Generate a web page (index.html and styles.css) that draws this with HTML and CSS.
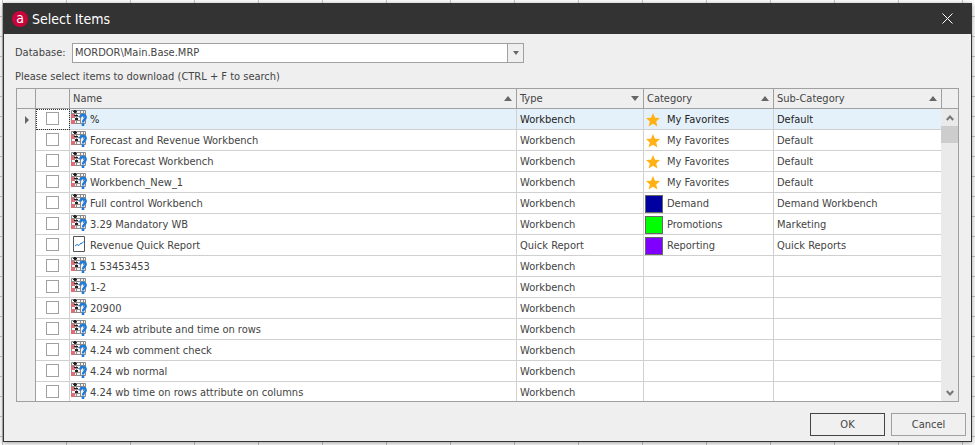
FILE: index.html
```html
<!DOCTYPE html>
<html lang="en">
<head>
<meta charset="utf-8">
<title>Select Items</title>
<link rel="stylesheet" href="styles.css">
</head>
<body>
<svg class="defs" aria-hidden="true">
  <symbol id="workbench" viewBox="0 0 16 16">
    <path fill="#f4f4f4" d="M0 0h14v14H0z"/>
    <path fill="none" stroke="#8a8a8a" d="M.5.5h14v13H.5zM5.500 0v14M9.500 0v14M12.500 0v8M0 3.500h14M0 6.500h9M0 10.500h10"/>
    <path fill="#dc6f76" d="M0 4h4v4H0zM0 10h4v4H0z"/>
    <path fill="#222" d="M2 1h4v1H2zM3 0h2v3H3zM3 5h4v1H3zM4 8h3v2H4z"/>
    <path fill="none" stroke="#1b7bdc" stroke-width="2.500" d="M9.300 7.500C9.500 4 14.700 4.200 14.700 7.200c0 2.300-2.700 2.300-2.700 5.300"/>
    <path fill="#1b7bdc" d="M10.700 13.500h2.600V16h-2.600z"/>
  </symbol>
  <symbol id="report" viewBox="0 0 16 16">
    <path fill="#fff" stroke="#555" d="M2.500.5h11v15h-11z"/>
    <path fill="none" stroke="#1b7bdc" d="m4 10 2-1.500 2 1 2-2.500 1 .5 1.500-2"/>
  </symbol>
  <symbol id="star" viewBox="0 0 14 14">
    <path fill="#ffb115" d="m7 0 2 4.700 5 .4-3.800 3.300 1.200 5L7 10.700l-4.400 2.700 1.200-5L0 5.100l5-.4z"/>
  </symbol>
</svg>
<main class="dialog">
  <header class="titlebar">
    <span class="logo">a</span>
    <h1>Select Items</h1>
    <button class="close" aria-label="Close"><svg viewBox="0 0 11 11"><path d="m.5.5 10 10m0-10-10 10"/></svg></button>
  </header>
  <div class="content">
    <div class="field">
      <label for="database">Database:</label>
      <div class="combo">
        <select id="database"><option>MORDOR\Main.Base.MRP</option></select>
        <span class="drop"><i class="down small"></i></span>
      </div>
    </div>
    <p class="hint">Please select items to download (CTRL + F to search)</p>
    <div class="frame">
      <table>
        <colgroup><col class="c-mark"><col class="c-check"><col><col class="c-type"><col class="c-cat"><col class="c-sub"></colgroup>
        <thead>
          <tr><th></th><th></th><th><span>Name<i class="up"></i></span></th><th><span>Type<i class="down"></i></span></th><th><span>Category<i class="up"></i></span></th><th><span>Sub-Category<i class="up"></i></span></th></tr>
        </thead>
        <tbody id="rows"></tbody>
      </table>
      <div class="scroll">
        <div class="corner"></div>
        <button aria-label="Scroll up"><svg viewBox="0 0 8 6"><path d="m.8 5 3.200-3.500L7.200 5"/></svg></button>
        <div class="thumb"></div>
        <button class="last" aria-label="Scroll down"><svg viewBox="0 0 8 6"><path d="m.8 1 3.200 3.500L7.200 1"/></svg></button>
      </div>
    </div>
  </div>
  <footer class="actions"><button class="primary">OK</button><button>Cancel</button></footer>
</main>
<script src="items.js"></script>
</body>
</html>
```
FILE: items.js
```js
const items = [
  ["%", "Workbench", "My Favorites", "Default"],
  ["Forecast and Revenue Workbench", "Workbench", "My Favorites", "Default"],
  ["Stat Forecast Workbench", "Workbench", "My Favorites", "Default"],
  ["Workbench_New_1", "Workbench", "My Favorites", "Default"],
  ["Full control Workbench", "Workbench", "Demand", "Demand Workbench"],
  ["3.29 Mandatory WB", "Workbench", "Promotions", "Marketing"],
  ["Revenue Quick Report", "Quick Report", "Reporting", "Quick Reports"],
  ["1 53453453", "Workbench", "", ""],
  ["1-2", "Workbench", "", ""],
  ["20900", "Workbench", "", ""],
  ["4.24 wb atribute and time on rows", "Workbench", "", ""],
  ["4.24 wb comment check", "Workbench", "", ""],
  ["4.24 wb normal", "Workbench", "", ""],
  ["4.24 wb time on rows attribute on columns", "Workbench", "", ""]
];

function categoryCell(category) {
  if (!category) return "";
  const mark = category === "My Favorites"
    ? '<svg class="star"><use href="#star"/></svg>'
    : `<b class="swatch ${category.toLowerCase()}"></b>`;
  return `<span class="category">${mark}${category}</span>`;
}

document.getElementById("rows").innerHTML = items.map(([name, type, category, sub], i) => {
  const icon = type === "Workbench" ? "workbench" : "report";
  return `<tr${i === 0 ? ' class="current"' : ""}>
    <td class="mark">${i === 0 ? '<i class="right"></i>' : ""}</td>
    <td class="check"><input type="checkbox" id="item${i}"></td>
    <td class="name"><label for="item${i}"><svg><use href="#${icon}"/></svg>${name}</label></td>
    <td>${type}</td><td class="cat">${categoryCell(category)}</td><td>${sub}</td></tr>`;
}).join("");
```
FILE: styles.css
```css
* { box-sizing: border-box; }
body {
  margin: 0;
  height: 100vh;
  padding: 3px;
  display: flex;
  overflow: hidden;
  font: 11px/20px "DejaVu Sans Condensed", "Noto Sans", sans-serif;
  color: #444;
  background-color: #fff;
  background-image:
    linear-gradient(90deg, #c6c6c6 1px, transparent 1px),
    linear-gradient(#c6c6c6 1px, transparent 1px);
  background-size: 64px 20px;
  background-position: 2px 16px;
}
button, select, input { font: inherit; color: inherit; margin: 0; padding: 0; border-radius: 0; }
.defs { position: absolute; width: 0; height: 0; }
.dialog {
  flex: 1;
  display: flex;
  flex-direction: column;
  border: 1px solid #333;
  border-top: 0;
  background: #efefef;
  box-shadow: 0 1px 5px rgba(0, 0, 0, .4);
}
.titlebar {
  flex: none;
  height: 31px;
  display: flex;
  align-items: center;
  gap: 4px;
  padding: 0 12px 0 8px;
  background: #333;
  color: #fff;
}
.logo {
  width: 16px;
  height: 16px;
  border-radius: 50%;
  background: #c8063c;
  font-size: 14px;
  line-height: 14px;
  text-align: center;
}
h1 { flex: 1; margin: 0; font-size: 14px; font-weight: 400; }
.close { width: 23px; height: 23px; display: grid; place-items: center; background: none; border: 0; }
.close svg { width: 11px; height: 11px; fill: none; stroke: #fff; }
.content { flex: 1; min-height: 0; display: flex; flex-direction: column; padding: 9px 12px 0; }
.field { display: flex; margin-left: -1px; }
.field label { width: 57px; }
.combo { display: flex; flex: 0 1 452px; height: 20px; border: 1px solid #a0a0a0; background: #fff; }
select { flex: 1; appearance: none; border: 0; background: none; padding: 0 2px; line-height: 18px; outline: 0; }
.drop { width: 16px; display: grid; place-items: center; border-left: 1px solid #a0a0a0; background: #efefef; pointer-events: none; }
.hint { margin: 4px 0 1px -1px; }
.frame { flex: 1; min-height: 0; display: flex; align-items: stretch; overflow: hidden; border: 1px solid #a0a0a0; background: #fff; }
table { flex: 1; min-width: 0; align-self: flex-start; table-layout: fixed; border-collapse: separate; border-spacing: 0; }
.c-mark { width: 19px; }
.c-check { width: 34px; }
.c-type { width: 127px; }
.c-cat { width: 130px; }
.c-sub { width: 167px; }
th {
  height: 20px;
  padding: 0 4px 0 3px;
  background: #efefef;
  border: solid #a0a0a0;
  border-width: 0 1px 1px 0;
  font-weight: 400;
  line-height: 19px;
  text-align: left;
}
th:last-child, td:last-child { border-right: 0; }
th span { display: flex; align-items: center; justify-content: space-between; }
td {
  height: 21px;
  padding: 1px 3px 0;
  border: solid #d0d0d0;
  border-width: 0 1px 1px 0;
  line-height: 19px;
  white-space: nowrap;
  overflow: hidden;
}
.mark { background: #efefef; border-right-color: #a0a0a0; border-bottom: 0; padding: 0 0 0 8px; }
.check { padding: 0; }
input { display: block; appearance: none; width: 13px; height: 13px; margin: 0 auto 1px; border: 1px solid #a0a0a0; background: #fff; }
.name { padding: 1px 1px 0; }
.name label { display: flex; gap: 3px; }
.name svg { width: 16px; height: 16px; }
.cat { padding: 1px 1px 0; }
.category { display: flex; align-items: center; gap: 4px; }
.star { width: 14px; height: 14px; margin: 0 3px 0 1px; }
.swatch { width: 18px; height: 18px; border: 1px solid #666; }
.demand { background: #0000a0; }
.promotions { background: #0f0; }
.reporting { background: #8000ff; }
.current td { color: #222; background: #e5f1fa; }
.current .mark { background: #efefef; }
.current .check { background: #fff; outline: 1px dotted #333; outline-offset: -1px; }
i { display: block; width: 0; height: 0; border: 0 solid transparent; }
.up { border-width: 0 4px 5px; border-bottom-color: #666; }
.down { border-width: 5px 4px 0; border-top-color: #666; }
.small { border-width: 4px 3px 0; }
.right { border-width: 4px 0 4px 4px; border-left-color: #666; }
.scroll { width: 17px; display: flex; flex-direction: column; background: #eaeaea; }
.corner { height: 20px; background: #efefef; border: solid #a0a0a0; border-width: 0 0 1px 1px; }
.scroll button { height: 17px; display: grid; place-items: center; background: none; border: 0; }
.scroll svg { width: 8px; height: 6px; fill: none; stroke: #777; stroke-width: 2; }
.thumb { height: 17px; background: #cdcdcd; }
.last { margin-top: auto; }
.actions { display: flex; justify-content: flex-end; gap: 6px; padding: 11px 5px 5px; }
.actions button { width: 75px; height: 23px; border: 1px solid #a0a0a0; background: #f0f0f0; }
.actions .primary { border-color: #444; }
```
